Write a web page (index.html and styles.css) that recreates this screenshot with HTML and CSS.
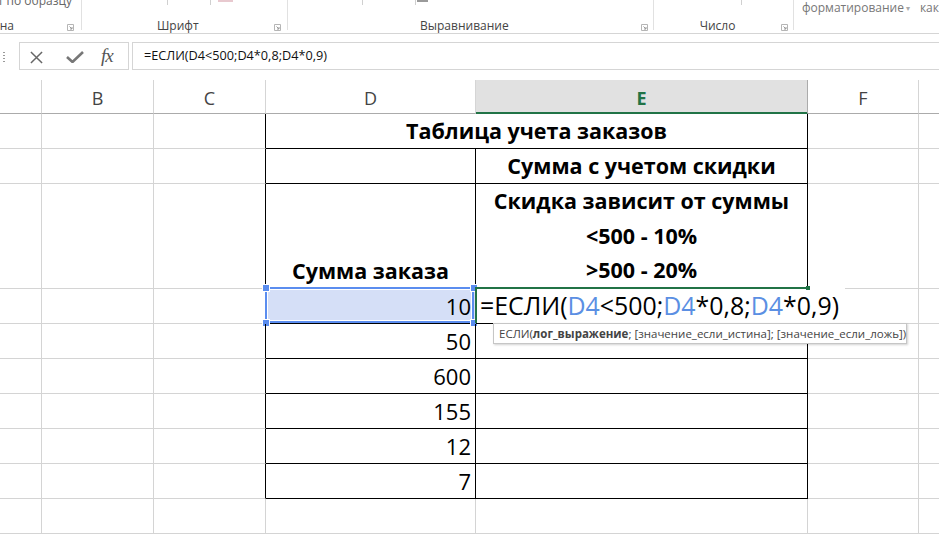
FILE: index.html
```html
<!DOCTYPE html>
<html lang="ru">
<head>
<meta charset="utf-8">
<title>Excel</title>
<link rel="stylesheet" href="styles.css">
</head>
<body>
<div class="ribbon">
  <div class="grp g1">
    <div class="top"><span class="rclip w72 toptext">Формат по образцу</span></div>
    <div class="lbl"><span class="rclip w14">Буфер обмена</span><span class="fill"></span><svg class="launch" viewBox="0 0 7 7"><path d="M0.5 6.5V0.5H6.5V6.5Z" fill="none" stroke="#b5b5b5"/><path d="M2.5 2.5L5 5M5 3V5H3" fill="none" stroke="#9a9a9a"/></svg></div>
  </div>
  <div class="grp g2">
    <div class="top"><i class="tick t1"></i><i class="tick t2"></i><i class="pink"></i></div>
    <div class="lbl"><span class="fill center">Шрифт</span><svg class="launch" viewBox="0 0 7 7"><path d="M0.5 6.5V0.5H6.5V6.5Z" fill="none" stroke="#b5b5b5"/><path d="M2.5 2.5L5 5M5 3V5H3" fill="none" stroke="#9a9a9a"/></svg></div>
  </div>
  <div class="grp g3">
    <div class="top"><i class="tick t3"></i><i class="tick t4"></i><i class="gbar"></i></div>
    <div class="lbl"><span class="fill center">Выравнивание</span><svg class="launch" viewBox="0 0 7 7"><path d="M0.5 6.5V0.5H6.5V6.5Z" fill="none" stroke="#b5b5b5"/><path d="M2.5 2.5L5 5M5 3V5H3" fill="none" stroke="#9a9a9a"/></svg></div>
  </div>
  <div class="grp g4">
    <div class="top"><i class="tick t5"></i></div>
    <div class="lbl"><span class="fill center">Число</span><svg class="launch" viewBox="0 0 7 7"><path d="M0.5 6.5V0.5H6.5V6.5Z" fill="none" stroke="#b5b5b5"/><path d="M2.5 2.5L5 5M5 3V5H3" fill="none" stroke="#9a9a9a"/></svg></div>
  </div>
  <div class="grp g5">
    <div class="top toprow"><span>форматирование</span><span class="caret">▾</span><span class="kak">как</span></div>
  </div>
</div>

<div class="fbar">
  <div class="grip"></div>
  <div class="btns">
    <svg class="ico-x" viewBox="0 0 14 14"><path d="M1 1L13 13M13 1L1 13" stroke="#666" stroke-width="1.6" fill="none"/></svg>
    <svg class="ico-ok" viewBox="0 0 18 12"><path d="M1 6L6.5 11L17 1" stroke="#777" stroke-width="2.6" fill="none"/></svg>
    <span class="ico-fx">fx</span>
  </div>
  <div class="finput">=ЕСЛИ(D4&lt;500;D4*0,8;D4*0,9)</div>
</div>

<div class="sheet">
  <div class="h"></div>
  <div class="h">B</div>
  <div class="h">C</div>
  <div class="h">D</div>
  <div class="h hact">E</div>
  <div class="h hr">F</div>
  <div class="h hlast"></div>

  <div class="c"></div><div class="c"></div><div class="c kr"></div>
  <div class="c kr kb span2 t">Таблица учета заказов</div>
  <div class="c"></div><div class="c last"></div>

  <div class="c"></div><div class="c"></div><div class="c kr"></div>
  <div class="c kr kb"></div>
  <div class="c kr kb t">Сумма с учетом скидки</div>
  <div class="c"></div><div class="c last"></div>

  <div class="c"></div><div class="c"></div><div class="c kr"></div>
  <div class="c kr kb t bottom">Сумма заказа</div>
  <div class="c kr kb t lines"><span>Скидка зависит от суммы</span><span>&lt;500 - 10%</span><span>&gt;500 - 20%</span></div>
  <div class="c"></div><div class="c last"></div>

  <div class="c"></div><div class="c"></div><div class="c kr"></div>
  <div class="c kr kb n sel">10<i class="frame"></i><i class="hd hd-tl"></i><i class="hd hd-tr"></i><i class="hd hd-bl"></i><i class="hd hd-br"></i></div>
  <div class="c kr kb edit">
    <div class="editor">=ЕСЛИ(<span class="ref">D4</span>&lt;500;<span class="ref">D4</span>*0,8;<span class="ref">D4</span>*0,9)</div>
    <i class="gtop"></i><i class="gsq"></i>
    <div class="tip">ЕСЛИ(<b>лог_выражение</b>; [значение_если_истина]; [значение_если_ложь])</div>
  </div>
  <div class="c"></div><div class="c last"></div>

  <div class="c"></div><div class="c"></div><div class="c kr"></div>
  <div class="c kr kb n">50</div><div class="c kr kb"></div>
  <div class="c"></div><div class="c last"></div>

  <div class="c"></div><div class="c"></div><div class="c kr"></div>
  <div class="c kr kb n">600</div><div class="c kr kb"></div>
  <div class="c"></div><div class="c last"></div>

  <div class="c"></div><div class="c"></div><div class="c kr"></div>
  <div class="c kr kb n">155</div><div class="c kr kb"></div>
  <div class="c"></div><div class="c last"></div>

  <div class="c"></div><div class="c"></div><div class="c kr"></div>
  <div class="c kr kb n">12</div><div class="c kr kb"></div>
  <div class="c"></div><div class="c last"></div>

  <div class="c"></div><div class="c"></div><div class="c kr"></div>
  <div class="c kr kb n">7</div><div class="c kr kb"></div>
  <div class="c"></div><div class="c last"></div>

  <div class="c"></div><div class="c"></div><div class="c"></div>
  <div class="c"></div><div class="c"></div>
  <div class="c"></div><div class="c last"></div>
</div>
</body>
</html>
```

FILE: styles.css
```css
* { box-sizing: border-box; }
html, body { margin: 0; padding: 0; background: #fff; }
body {
  width: 939px;
  height: 534px;
  overflow: hidden;
  font-family: "Open Sans", "Noto Sans", sans-serif;
  color: #000;
}

/* ---------- ribbon ---------- */
.ribbon {
  height: 34px;
  border-bottom: 1px solid #d5d5d5;
  display: flex;
  overflow: hidden;
  font-size: 12px;
  color: #444;
}
.grp {
  display: flex;
  flex-direction: column;
  height: 30px;
  border-right: 1px solid #e1e1e1;
  position: relative;
}
.g1 { width: 82px; }
.g2 { width: 206px; }
.g3 { width: 367px; }
.g4 { width: 140px; }
.g5 { flex: 1; border-right: none; }
.top { flex: none; height: 19px; position: relative; display: flex; }
.toptext { margin-top: -6px; line-height: 14px; color: #666; }
.toprow { line-height: 14px; color: #777; padding-left: 8px; padding-top: 1px; }
.caret { font-size: 8px; color: #aaa; margin-left: 2px; }
.kak { margin-left: 10px; }
.lbl {
  flex: none;
  display: flex;
  align-items: center;
  height: 14px;
  line-height: 14px;
}
.rclip {
  direction: rtl;
  overflow: hidden;
  white-space: nowrap;
  display: block;
}
.w72 { width: 72px; }
.w14 { width: 14px; }
.fill { flex: 1; }
.center { text-align: center; }
.launch { width: 7px; height: 7px; margin-right: 6px; margin-top: 2px; }
.g1 .launch { margin-right: 7px; }
.g3 .launch, .g4 .launch { margin-right: 5px; }
.tick { position: absolute; top: 0; width: 1px; height: 5px; background: #d0d0d0; }
.t1 { left: 85px; }
.t2 { left: 128px; }
.t3 { left: 74px; }
.t4 { left: 127px; }
.t5 { left: 87px; }
.pink { position: absolute; top: 0; left: 136px; width: 15px; height: 2px; background: #e8c9cf; }
.gbar { position: absolute; top: 0; left: 129px; width: 11px; height: 2px; background: #9a9a9a; }

/* ---------- formula bar ---------- */
.fbar {
  display: flex;
  height: 28px;
  margin-top: 8px;
}
.grip {
  margin-left: 3px;
  width: 2px;
  height: 11px;
  align-self: center;
  margin-top: 3px;
  background: repeating-linear-gradient(to bottom, #9a9a9a 0 1px, transparent 1px 3px);
}
.btns {
  margin-left: 14px;
  width: 110px;
  border: 1px solid #d5d5d5;
  display: flex;
  align-items: center;
  position: relative;
}
.ico-x { width: 13px; height: 13px; margin-left: 10px; margin-top: 2px; }
.ico-ok { width: 18px; height: 12px; margin-left: 23px; margin-top: 2px; }
.ico-fx {
  margin-left: 17px;
  font-family: "Liberation Serif", "DejaVu Serif", serif;
  font-style: italic;
  font-size: 19px;
  color: #555;
  letter-spacing: -1px;
  line-height: 20px;
}
.finput {
  margin-left: 3px;
  flex: 1;
  border: 1px solid #d5d5d5;
  border-right: none;
  padding-left: 11px;
  font-size: 12.7px;
  line-height: 25px;
  color: #111;
}

/* ---------- sheet ---------- */
.sheet {
  margin-top: 10px;
  display: grid;
  grid-template-columns: 42px 112px 112px 210px 332px 111px 1fr;
  grid-template-rows: 34px 35px 35px 105px repeat(7, 35px);
}
.h {
  border-right: 1px solid #d5d5d5;
  border-bottom: 1px solid #ababab;
  font-size: 18px;
  color: #444;
  display: flex;
  align-items: center;
  justify-content: center;
  padding-top: 3px;
}
.hact {
  background: #e1e1e1;
  color: #217346;
  font-weight: 700;
  border-right-color: #ababab;
  border-bottom-color: #217346;
  box-shadow: inset 0 -1px 0 #217346;
}
.hlast { border-right: none; }

.c {
  border-right: 1px solid #d4d4d4;
  border-bottom: 1px solid #d4d4d4;
  position: relative;
}
.last { border-right: none; }
.kr { border-right-color: #000; }
.kb { border-bottom-color: #000; }
.span2 { grid-column: span 2; }

.t {
  font-weight: 700;
  font-size: 21.5px;
  line-height: 34px;
  display: flex;
  justify-content: center;
  align-items: center;
  white-space: nowrap;
}
.bottom { align-items: flex-end; }
.lines {
  flex-direction: column;
  justify-content: center;
  line-height: 34.6px;
}
.n {
  font-size: 22px;
  line-height: 34px;
  text-align: right;
  padding-right: 4px;
}

/* selection on D4 */
.sel { background: #d5dff7; }
.frame {
  position: absolute;
  left: -1px;
  top: -2px;
  width: 209px;
  height: 36px;
  border: 2px solid #5b8def;
  box-shadow: inset 0 0 0 1px #fff;
}
.hd {
  position: absolute;
  width: 6px;
  height: 6px;
  background: #5b8def;
  box-shadow: 0 0 0 1px #fff;
}
.hd-tl { left: -3px; top: -4px; }
.hd-tr { left: 205px; top: -4px; }
.hd-bl { left: -3px; top: 31px; }
.hd-br { left: 205px; top: 31px; }

/* editing E4 */
.edit { z-index: 2; }
.editor {
  position: absolute;
  left: -1px;
  top: -2px;
  height: 36px;
  border-left: 2px solid #217346;
  background: #fff;
  padding: 0 6px 0 3px;
  font-size: 24.9px;
  line-height: 36px;
  white-space: nowrap;
}
.ref { color: #5b8fe3; }
.gtop {
  position: absolute;
  left: -1px;
  top: -2px;
  width: 333px;
  height: 2px;
  background: #217346;
}
.gsq {
  position: absolute;
  left: 330px;
  top: -3px;
  width: 4px;
  height: 4px;
  background: #217346;
}
.tip {
  position: absolute;
  left: 17px;
  top: 34px;
  width: 414px;
  height: 21px;
  background: #fff;
  border: 1px solid #c6c6c6;
  box-shadow: 1px 1px 2px rgba(0, 0, 0, 0.18);
  font-size: 11.5px;
  line-height: 19px;
  padding-left: 5px;
  color: #444;
  white-space: nowrap;
}
.tip b { font-weight: 700; }
```
